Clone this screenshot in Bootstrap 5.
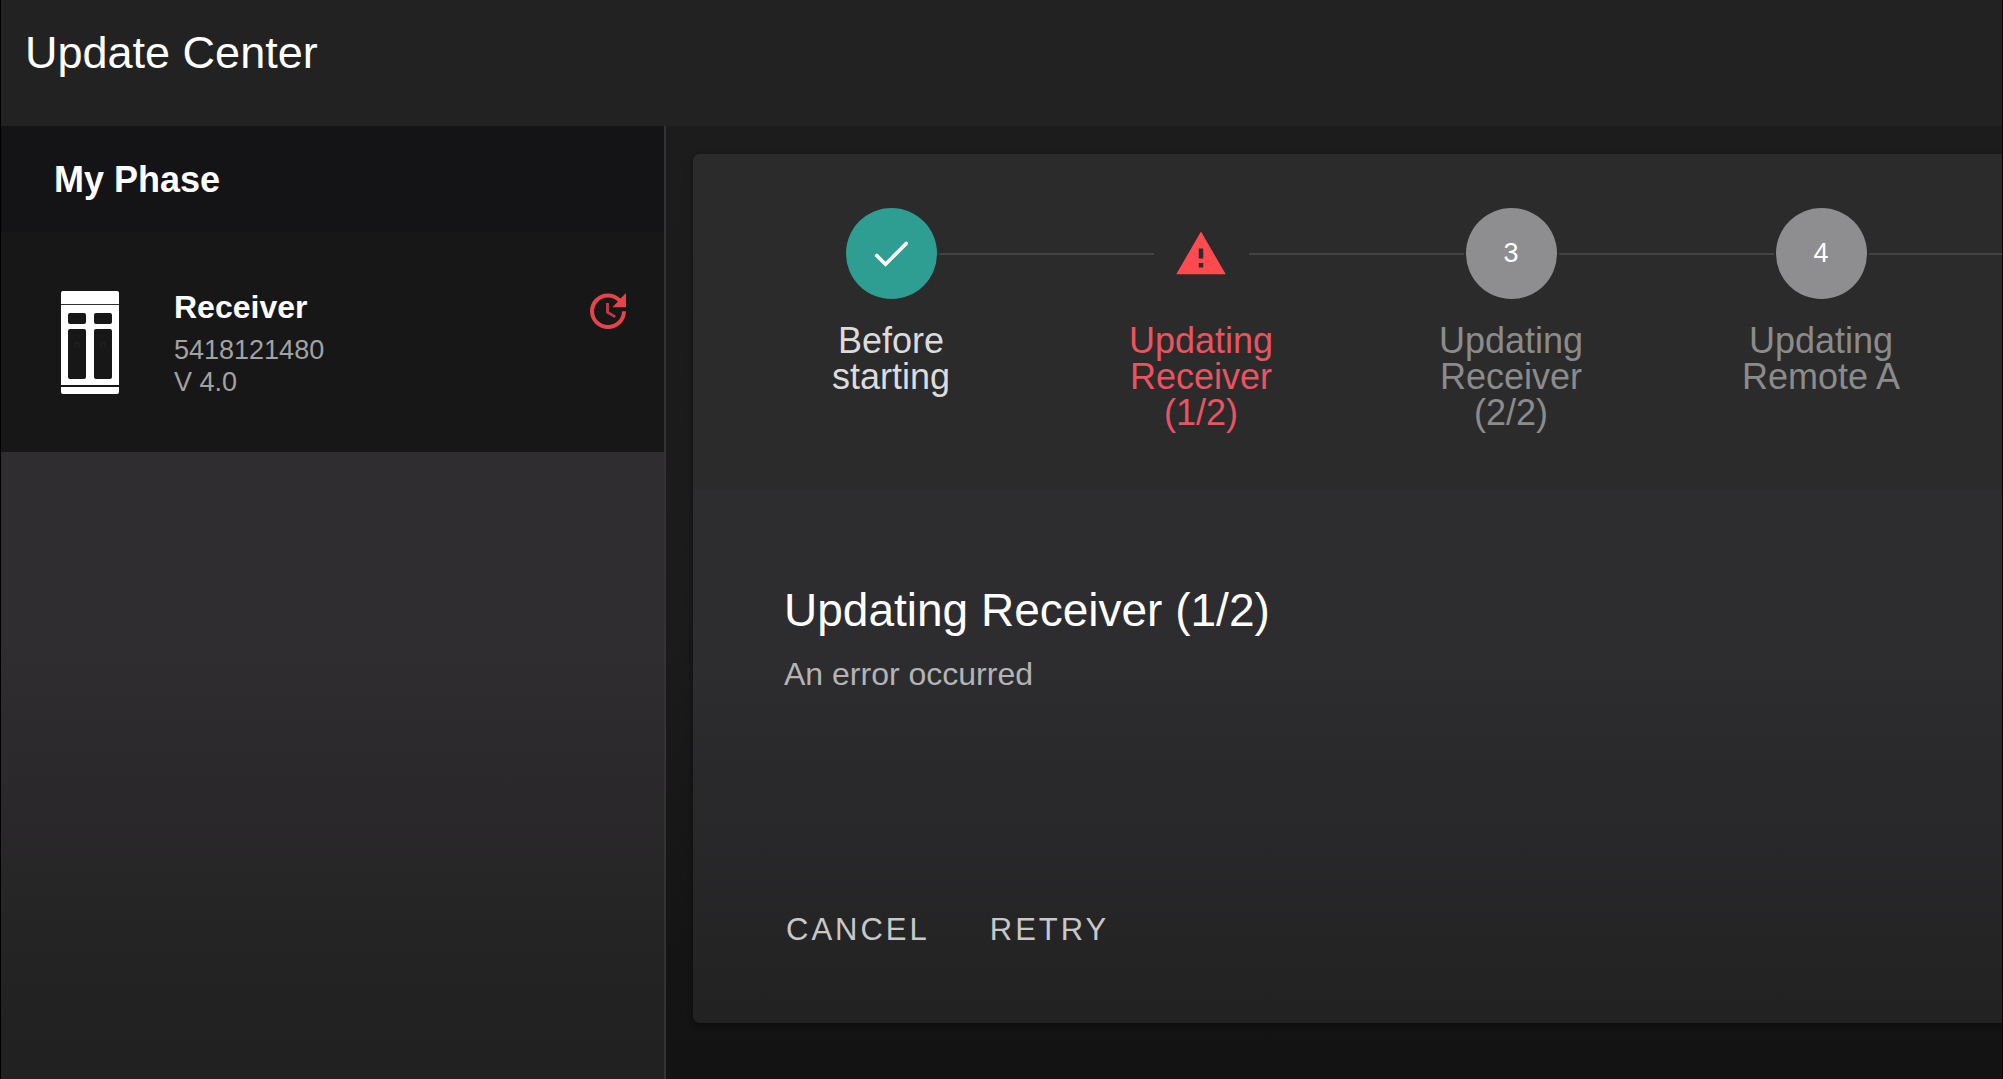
<!DOCTYPE html>
<html lang="en">
<head>
<meta charset="utf-8">
<meta name="viewport" content="width=device-width, initial-scale=1">
<title>Update Center</title>
<link href="https://cdn.jsdelivr.net/npm/bootstrap@5.3.0/dist/css/bootstrap.min.css" rel="stylesheet">
<style>
  body {
    font-family: "Liberation Sans", Arial, sans-serif;
    color: #fff;
    background: #141414;
    border: solid #000;
    border-width: 0 1px;
  }
  .app-bar { background: #222; padding: 25px 24px 45px; }
  .title-text { font-size: 46px; line-height: 56px; font-weight: 400; }
  .app-title { font-size: 45px; line-height: 56px; font-weight: 400; }

  .side-panel {
    flex: 0 0 665px;
    max-width: 50%;
    background: linear-gradient(#302d30, #302d30 54%, #212121 96%);
    border-right: 2px solid #333334;
  }
  .group-title {
    background: #141316;
    padding: 27px 53px 25px;
    font-size: 36px; line-height: 54px; font-weight: 700;
  }
  .device-item {
    background: #171717;
    padding: 55px 32px 54px 60px;
    gap: 55px;
  }
  .device-name { font-size: 32px; line-height: 40px; margin-bottom: 7px; }
  .device-meta { font-size: 27px; line-height: 32px; color: #a2a2a2; }

  .content-area {
    background: linear-gradient(#1c1c1c, #1b1b1b 50%, #131313 96%);
    padding: 28px 0 56px 27px;
  }
  .wizard {
    border-radius: 7px 0 0 7px;
    background: linear-gradient(#2d2d2f, #2d2d2f 58%, #222223);
    box-shadow: 0 2px 6px rgba(0, 0, 0, .45);
  }
  .step-list { background: #2b2b2b; padding: 54px 0 59px 43px; }
  .step { flex: 0 0 310px; }
  .step-more { flex: 1 1 0; }
  .track { height: 91px; gap: 2px; }
  .line { flex: 1 1 0; height: 2px; background: #434344; }
  .dot {
    width: 91px; height: 91px;
    background: #8e8e90;
    font-size: 27px;
  }
  .dot-done { background: #2e9e92; }
  .dot-error { background: transparent; }
  .step-label {
    width: 180px; margin-top: 24px;
    font-size: 36px; line-height: 36px;
    color: #8b8b8b;
  }
  .label-done { color: #dcdcdc; }
  .label-error { color: #ea5360; }

  .wizard-body { padding: 92px 91px 69px; }
  .status-text { font-size: 32px; line-height: 40px; color: #b4b4b4; }
  .actions { gap: 56px; }
  .btn-plain {
    --bs-btn-color: #c8c8c8;
    --bs-btn-hover-color: #fff;
    --bs-btn-active-color: #fff;
    --bs-btn-padding-x: 2px;
    --bs-btn-padding-y: 0;
    --bs-btn-border-width: 0;
    --bs-btn-font-size: 31px;
    --bs-btn-line-height: 48px;
    letter-spacing: 3px;
  }
</style>
</head>
<body class="d-flex flex-column min-vh-100 overflow-x-hidden">
  <header class="app-bar">
    <h1 class="app-title m-0">Update Center</h1>
  </header>

  <div class="d-flex flex-grow-1">
    <aside class="side-panel">
      <h2 class="group-title m-0">My Phase</h2>
      <a href="#receiver" class="device-item d-flex align-items-center text-decoration-none text-white">
        <svg class="flex-shrink-0" width="58" height="103" viewBox="0 0 58 103" aria-hidden="true">
          <rect width="58" height="103" rx="2" fill="#fff"/>
          <rect y="13" width="58" height="1" fill="#333"/>
          <rect y="94" width="58" height="2" fill="#171717"/>
          <g fill="#171717">
            <rect x="7" y="22" width="18" height="11" rx="2"/>
            <rect x="33" y="22" width="18" height="11" rx="2"/>
            <rect x="7" y="38" width="18" height="50" rx="2"/>
            <rect x="33" y="38" width="18" height="50" rx="2"/>
          </g>
          <path d="M14 57v-5h4v5M40 57v-5h4v5" fill="none" stroke="#232323" stroke-width="1"/>
        </svg>
        <div class="flex-grow-1">
          <div class="device-name fw-bold">Receiver</div>
          <div class="device-meta">5418121480</div>
          <div class="device-meta">V 4.0</div>
        </div>
        <svg class="flex-shrink-0 align-self-start" width="48" height="48" viewBox="0 0 24 24" fill="#e8434a" role="img" aria-label="Update available">
          <path d="M21 10.12h-6.78l2.74-2.82c-2.73-2.7-7.15-2.8-9.88-.1-2.73 2.71-2.73 7.08 0 9.79s7.15 2.71 9.88 0C18.32 15.65 19 14.08 19 12.1h2c0 1.98-.88 4.55-2.64 6.29-3.51 3.48-9.21 3.48-12.72 0-3.5-3.47-3.53-9.11-.02-12.58s9.14-3.47 12.65 0L21 3v7.12z"/>
          <path d="M12.5 8v4.25l3.5 2.08-.72 1.21L11 13V8h1.5z" opacity=".8"/>
        </svg>
      </a>
    </aside>

    <main class="content-area d-flex flex-grow-1 overflow-hidden">
      <section class="wizard d-flex flex-column flex-grow-1 overflow-hidden">
        <ol class="step-list list-unstyled d-flex m-0">
          <li class="step d-flex flex-column align-items-center">
            <div class="track d-flex align-items-center w-100">
              <span class="flex-fill"></span>
              <span class="dot dot-done rounded-circle d-flex align-items-center justify-content-center">
                <svg width="44" height="44" viewBox="0 0 24 24" aria-hidden="true"><path d="M4.2 12.8L9 17.6 20.3 6.3" fill="none" stroke="#fff" stroke-width="2" stroke-linecap="round"/></svg>
              </span>
              <span class="line"></span>
            </div>
            <div class="step-label label-done text-center">Before starting</div>
          </li>
          <li class="step d-flex flex-column align-items-center" aria-current="step">
            <div class="track d-flex align-items-center w-100">
              <span class="line"></span>
              <span class="dot dot-error d-flex align-items-center justify-content-center">
                <svg width="54" height="54" viewBox="0 0 24 24" fill="#ff4b4f" aria-hidden="true"><path d="M13 14h-2V9.5h2M13 18h-2v-2h2M1 21h22L12 2 1 21z"/></svg>
              </span>
              <span class="line"></span>
            </div>
            <div class="step-label label-error text-center">Updating Receiver (1/2)</div>
          </li>
          <li class="step d-flex flex-column align-items-center">
            <div class="track d-flex align-items-center w-100">
              <span class="line"></span>
              <span class="dot rounded-circle d-flex align-items-center justify-content-center">3</span>
              <span class="line"></span>
            </div>
            <div class="step-label text-center">Updating Receiver (2/2)</div>
          </li>
          <li class="step d-flex flex-column align-items-center">
            <div class="track d-flex align-items-center w-100">
              <span class="line"></span>
              <span class="dot rounded-circle d-flex align-items-center justify-content-center">4</span>
              <span class="line"></span>
            </div>
            <div class="step-label text-center">Updating Remote A</div>
          </li>
          <li class="step-more" aria-hidden="true">
            <div class="track d-flex align-items-center"><span class="line"></span></div>
          </li>
        </ol>

        <div class="wizard-body d-flex flex-column flex-grow-1">
          <h2 class="title-text m-0">Updating Receiver (1/2)</h2>
          <p class="status-text mt-3 mb-0">An error occurred</p>
          <div class="actions d-flex mt-auto">
            <button type="button" class="btn btn-plain text-uppercase">Cancel</button>
            <button type="button" class="btn btn-plain text-uppercase">Retry</button>
          </div>
        </div>
      </section>
    </main>
  </div>
<script src="https://cdn.jsdelivr.net/npm/bootstrap@5.3.0/dist/js/bootstrap.bundle.min.js"></script>
</body>
</html>
